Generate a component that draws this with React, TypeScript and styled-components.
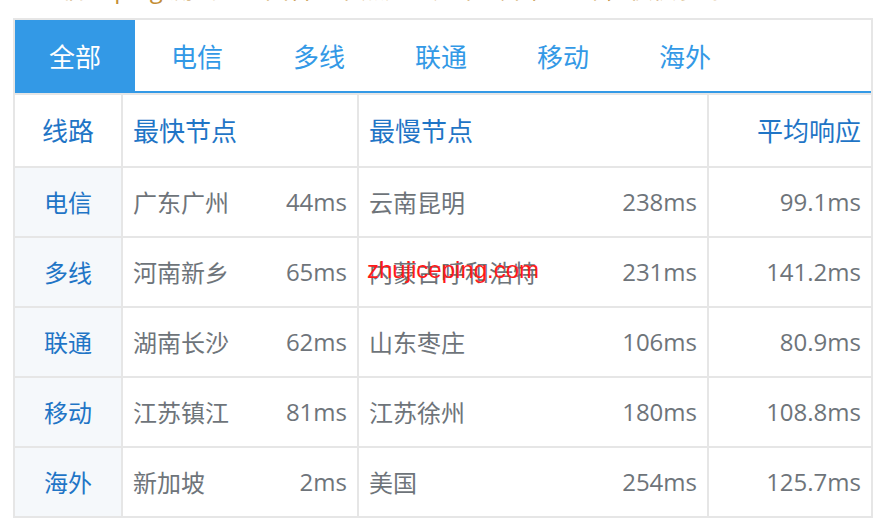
import React from "react";
import styled, { createGlobalStyle } from "styled-components";

const Global = createGlobalStyle`
  html, body { margin: 0; padding: 0; background: #ffffff; }
  body { font-family: "Open Sans", "Noto Sans CJK SC", sans-serif; }
`;

const Page = styled.div`
  padding-left: 13px;
  width: 860px;
`;

const Caption = styled.div`
  height: 5px;
  overflow: hidden;
  padding-left: 47px;
  margin-bottom: 13px;
  white-space: nowrap;
`;

const CaptionText = styled.span`
  display: block;
  margin-top: -25px;
  font-size: 24px;
  line-height: 28px;
  color: #c38d35;
`;

const Box = styled.div`
  width: 860px;
  box-sizing: border-box;
`;

const TabBar = styled.div`
  display: flex;
  gap: 2px;
  height: 71px;
  border: 2px solid #e6e6e6;
  border-bottom: none;
  box-shadow: inset 0 -2px 0 #3399e6;
  padding-bottom: 2px;
`;

const Tab = styled.div<{ $active?: boolean }>`
  width: 120px;
  display: flex;
  align-items: center;
  justify-content: center;
  font-size: 26px;
  color: ${(p) => (p.$active ? "#ffffff" : "#3399e6")};
  background: ${(p) => (p.$active ? "#3399e6" : "transparent")};
`;

const Grid = styled.div`
  display: grid;
  grid-template-columns: 106px 234px 348px 162px;
  grid-template-rows: 71px repeat(5, 68px);
  gap: 2px;
  padding: 2px;
  background: #e6e6e6;
`;

const Cell = styled.div<{ $align?: "left" | "center" | "right" | "split"; $head?: boolean; $line?: boolean }>`
  position: relative;
  display: flex;
  align-items: center;
  justify-content: ${(p) =>
    p.$align === "center" ? "center" : p.$align === "right" ? "flex-end" : p.$align === "split" ? "space-between" : "flex-start"};
  padding: 0 10px 2px 10px;
  background: ${(p) => (p.$line ? "#f5f8fb" : "#ffffff")};
  color: ${(p) => (p.$head || p.$line ? "#1f75c6" : "#6e747a")};
  font-size: ${(p) => (p.$head ? "26px" : "24px")};
  white-space: nowrap;
`;

const Watermark = styled.span`
  position: absolute;
  left: 8px;
  top: 20px;
  font-family: "Liberation Sans", Arial, sans-serif;
  font-size: 24px;
  line-height: 1;
  color: #ff1a1a;
  pointer-events: none;
`;

const tabs = ["全部", "电信", "多线", "联通", "移动", "海外"];

const rows = [
  { line: "电信", fast: "广东广州", fastMs: "44ms", slow: "云南昆明", slowMs: "238ms", avg: "99.1ms" },
  { line: "多线", fast: "河南新乡", fastMs: "65ms", slow: "内蒙古呼和浩特", slowMs: "231ms", avg: "141.2ms", mark: true },
  { line: "联通", fast: "湖南长沙", fastMs: "62ms", slow: "山东枣庄", slowMs: "106ms", avg: "80.9ms" },
  { line: "移动", fast: "江苏镇江", fastMs: "81ms", slow: "江苏徐州", slowMs: "180ms", avg: "108.8ms" },
  { line: "海外", fast: "新加坡", fastMs: "2ms", slow: "美国", slowMs: "254ms", avg: "125.7ms" },
];

export default function App() {
  return (
    <>
      <Global />
      <Page>
        <Caption>
          <CaptionText>临时 ping 测试的全国各地节点延迟如下（单位 ms），仅供参考</CaptionText>
        </Caption>
        <Box>
          <TabBar>
            {tabs.map((t, i) => (
              <Tab key={t} $active={i === 0}>
                {t}
              </Tab>
            ))}
          </TabBar>
          <Grid>
            <Cell $head $align="center">线路</Cell>
            <Cell $head>最快节点</Cell>
            <Cell $head>最慢节点</Cell>
            <Cell $head $align="right">平均响应</Cell>
            {rows.map((r) => (
              <React.Fragment key={r.line}>
                <Cell $line $align="center">{r.line}</Cell>
                <Cell $align="split">
                  <span>{r.fast}</span>
                  <span>{r.fastMs}</span>
                </Cell>
                <Cell $align="split">
                  <span>{r.slow}</span>
                  <span>{r.slowMs}</span>
                  {r.mark && <Watermark>zhujiceping.com</Watermark>}
                </Cell>
                <Cell $align="right">{r.avg}</Cell>
              </React.Fragment>
            ))}
          </Grid>
        </Box>
      </Page>
    </>
  );
}
